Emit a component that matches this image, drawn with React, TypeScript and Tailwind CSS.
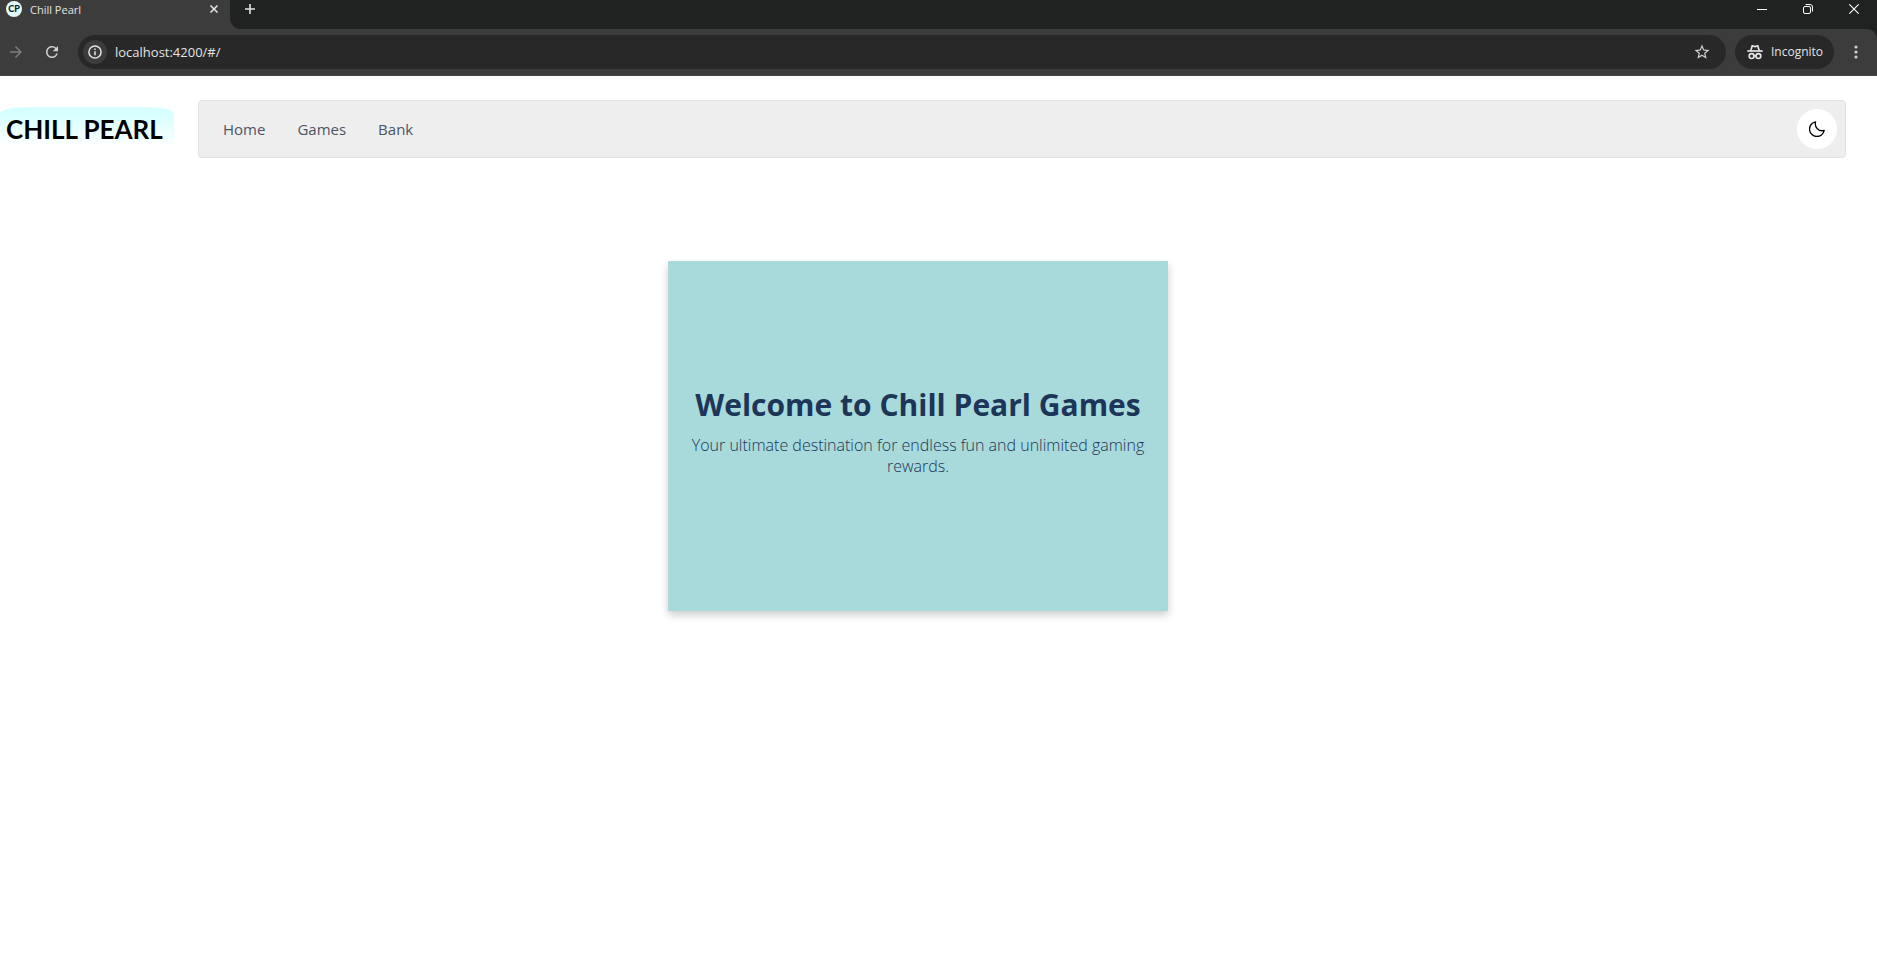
import type { ReactNode } from "react";
import { MdArrowForward, MdRefresh, MdStarBorder } from "react-icons/md";

const stroke = { fill: "none", stroke: "currentColor" } as const;

function IconButton({ label, className, children }: { label: string; className: string; children: ReactNode }) {
  return (
    <button type="button" aria-label={label} className={`flex shrink-0 items-center justify-center ${className}`}>
      {children}
    </button>
  );
}

function TabStrip() {
  return (
    <div className="flex h-[29px] bg-[#3c3c3c]">
      <div className="flex h-[18px] w-[230px] shrink-0 items-center pl-[6px]">
        <svg width="16" height="16" viewBox="0 0 16 16" aria-hidden="true">
          <circle cx="8" cy="8" r="8" fill="#e2fbfb" />
          <text x="8" y="11" textAnchor="middle" fontSize="9" fontWeight="900" fill="#0b1a22" fontFamily="Lato, sans-serif">CP</text>
        </svg>
        <span className="ml-2 grow pt-px text-[11px] leading-[18px] text-[#e3e3e3]">Chill Pearl</span>
        <IconButton label="Close tab" className="mr-2 h-4 w-4">
          <svg width="12" height="12" viewBox="0 0 12 12" {...stroke} strokeWidth="1.6"><path d="M2.500 2.500l7 7M9.500 2.500l-7 7" /></svg>
        </IconButton>
      </div>
      <div className="flex h-[29px] grow items-start rounded-bl-[11px] bg-[#202221]">
        <IconButton label="New tab" className="ml-3 h-[18px] w-4">
          <svg width="12" height="12" viewBox="0 0 12 12" {...stroke} strokeWidth="1.6"><path d="M6 1v10M1 6h10" /></svg>
        </IconButton>
        <div className="ml-auto flex text-white">
          <IconButton label="Minimize" className="h-[18px] w-[46px]">
            <svg width="10" height="10" viewBox="0 0 10 10" {...stroke}><path d="M0 5.500h10" /></svg>
          </IconButton>
          <IconButton label="Restore" className="h-[18px] w-[46px]">
            <svg width="10" height="10" viewBox="0 0 10 10" {...stroke}>
              <rect x=".5" y="2.500" width="7" height="7" rx="1.500" />
              <path d="M2.500 .5h4.500a2.500 2.500 0 0 1 2.500 2.500v4.500" />
            </svg>
          </IconButton>
          <IconButton label="Close" className="h-[18px] w-[46px]">
            <svg width="10" height="10" viewBox="0 0 10 10" {...stroke} strokeWidth="1.1"><path d="M.3 .3l9.400 9.400M9.700 .3l-9.400 9.400" /></svg>
          </IconButton>
        </div>
      </div>
    </div>
  );
}

function Toolbar() {
  return (
    <div className="bg-[#202221]">
      <div className="flex h-[47px] items-center rounded-tr-[10px] border-b border-[#4a4646] bg-[#3c3c3c]">
        <IconButton label="Forward" className="ml-2 h-4 w-4 text-[#7c7c7c]">
          <MdArrowForward className="h-[18px] w-[18px] shrink-0" />
        </IconButton>
        <IconButton label="Reload" className="ml-5 h-4 w-4 text-[#d0d0d0]">
          <MdRefresh className="h-[18px] w-[18px] shrink-0" />
        </IconButton>
        <div className="ml-[18px] flex h-[34px] grow items-center rounded-full bg-[#282828] pr-4 pl-[5px]">
          <IconButton label="View site information" className="h-6 w-6 rounded-full bg-[#3c3c3c] text-[#e3e3e3]">
            <svg width="14" height="14" viewBox="0 0 14 14" {...stroke} strokeWidth="1.5"><circle cx="7" cy="7" r="6.100" /><path d="M7 6.200v4M7 3.600v1.500" /></svg>
          </IconButton>
          <input aria-label="Address" defaultValue="localhost:4200/#/" className="ml-2 min-w-0 grow bg-transparent text-[13px] leading-5 text-[#e3e3e3] outline-none" />
          <IconButton label="Bookmark this tab" className="h-4 w-4 text-[#d0d0d0]">
            <MdStarBorder className="h-[18px] w-[18px] shrink-0" />
          </IconButton>
        </div>
        <button type="button" className="ml-[9px] flex h-[34px] w-[99px] shrink-0 items-center rounded-full bg-[#282828] pl-3 text-[#e3e3e3]">
          <svg width="16" height="16" viewBox="0 0 16 16" {...stroke} strokeWidth="1.700" strokeLinejoin="round" aria-hidden="true">
            <path d="M.3 7h15.400" />
            <path d="M3.800 6.800L5.200 1.700L8 2.600l2.800-.9L12.200 6.800" />
            <circle cx="4.600" cy="12.100" r="2.400" />
            <circle cx="11.400" cy="12.100" r="2.400" />
            <path d="M7 11.800h2" />
          </svg>
          <span className="ml-2 text-[12px] leading-4">Incognito</span>
        </button>
        <IconButton label="Menu" className="mr-[13px] ml-[14px] h-4 w-4 text-[#d0d0d0]">
          <svg width="4" height="14" viewBox="0 0 4 14" fill="currentColor"><circle cx="2" cy="2" r="1.600" /><circle cx="2" cy="7" r="1.600" /><circle cx="2" cy="12" r="1.600" /></svg>
        </IconButton>
      </div>
    </div>
  );
}

export default function App() {
  return (
    <div className="min-h-screen bg-white font-['Open_Sans','Noto_Sans',sans-serif]">
      <header className="text-[#e3e3e3]">
        <TabStrip />
        <Toolbar />
      </header>
      <div className="flex items-center pt-6 pr-[31px]">
        <a href="#/" className="mr-6 flex h-[44px] w-[174px] shrink-0 items-center rounded-[28px_28px_0_0/6px_6px_0_0] bg-linear-to-b from-[#d8ffff] from-20% to-white to-90% pl-[6px] font-['Lato',sans-serif] text-[26px] leading-8 font-bold text-black">
          CHILL PEARL
        </a>
        <nav className="flex h-[58px] grow items-center rounded-[4px] border border-[#dee2e6] bg-[#eeeeee] pr-2 pl-6">
          <ul className="flex gap-8 text-[15px] leading-6 text-[#4b5563]">
            <li><a href="#/">Home</a></li>
            <li><a href="#/games">Games</a></li>
            <li><a href="#/bank">Bank</a></li>
          </ul>
          <IconButton label="Dark mode" className="ml-auto h-10 w-10 rounded-full bg-white text-black">
            <svg width="16" height="16" viewBox="0 0 16 16" {...stroke} strokeWidth="1.3" strokeLinejoin="round">
              <path d="M6.600 .8A7.400 7.400 0 1 0 15.200 9.400 6.900 6.900 0 0 1 6.600 .8z" />
            </svg>
          </IconButton>
        </nav>
      </div>
      <main className="flex justify-center pt-[103px] pr-[41px]">
        <section className="flex h-[350px] w-[500px] flex-col items-center justify-center bg-[#a8dadc] px-5 text-center text-[#1d3557] shadow-[0_4px_8px_rgba(0,0,0,0.2)]">
          <h1 className="text-[30px] leading-10 font-bold whitespace-nowrap">Welcome to Chill Pearl Games</h1>
          <p className="my-[10px] text-[16px] leading-[21px] font-light">Your ultimate destination for endless fun and unlimited gaming rewards.</p>
        </section>
      </main>
    </div>
  );
}
